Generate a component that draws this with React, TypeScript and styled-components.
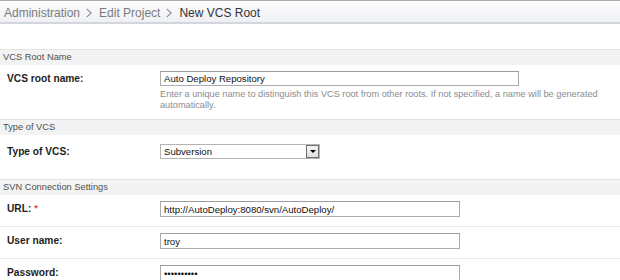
import React from 'react'
import styled, { createGlobalStyle } from 'styled-components'

const GlobalStyle = createGlobalStyle`
  *, *::before, *::after { box-sizing: border-box; }
  html, body { margin: 0; padding: 0; background: #fff; }
  body {
    width: 620px;
    height: 280px;
    overflow: hidden;
    font-family: "Liberation Sans", Arial, sans-serif;
  }
`

const TopBar = styled.div`
  height: 24px;
  border-top: 1px solid #adadad;
  border-bottom: 2px solid #d3d6dd;
  background: linear-gradient(#fcfcfd, #eef0f4);
  display: flex;
  align-items: center;
  padding: 3px 0 0 4px;
  font-size: 12px;
`

const Crumb = styled.span<{ $current?: boolean }>`
  color: ${({ $current }) => ($current ? '#333' : '#7c7c7c')};
`

const Chevron = styled.svg`
  margin: 0 7px 0 6px;
  flex: none;
`

const Form = styled.div`
  margin-top: 25px;
`

const SectionHeader = styled.div`
  height: 16px;
  border-top: 1px solid #e3e3e3;
  background: #f3f3f3;
  color: #505050;
  font-size: 9.3px;
  line-height: 15px;
  padding-left: 3px;
`

const Row = styled.div<{ $top: number; $bottom: number; $line?: boolean }>`
  display: grid;
  grid-template-columns: 160px 1fr;
  align-items: start;
  padding: ${({ $top, $bottom }) => `${$top}px 0 ${$bottom}px`};
  border-bottom: ${({ $line }) => ($line ? '1px solid #e9e9e9' : 'none')};
`

const Label = styled.label<{ $h: number }>`
  padding-left: 7px;
  font-weight: bold;
  font-size: 10.2px;
  color: #1e1e1e;
  line-height: ${({ $h }) => $h}px;
`

const Required = styled.span`
  color: #e0393a;
  margin-left: 3px;
  font-size: 9px;
  position: relative;
  top: -1px;
`

const TextBox = styled.input<{ $w: number; $h: number }>`
  display: block;
  width: ${({ $w }) => $w}px;
  height: ${({ $h }) => $h}px;
  margin: 0;
  padding: 0 0 0 3px;
  border: 1px solid #acacac;
  border-top-color: #9d9d9d;
  border-radius: 0;
  background: #fff;
  font-family: "Liberation Sans", Arial, sans-serif;
  font-size: 9.6px;
  color: #111;
  outline: none;
`

const Help = styled.div`
  width: 458px;
  margin-top: 3px;
  font-size: 9.2px;
  line-height: 11px;
  color: #8c8c8c;
`

const Select = styled.div`
  width: 160px;
  height: 15px;
  border: 1px solid #b4b4b4;
  display: flex;
  align-items: center;
  justify-content: space-between;
  padding-left: 3px;
  font-size: 9.6px;
  color: #111;
`

const SelectButton = styled.div`
  width: 13px;
  height: 13px;
  border: 1px solid #6f6f6f;
  background: linear-gradient(#f6f6f6, #dedede);
  display: flex;
  align-items: center;
  justify-content: center;
`

const Arrow = styled.div`
  width: 0;
  height: 0;
  border-left: 3px solid transparent;
  border-right: 3px solid transparent;
  border-top: 3px solid #000;
`

const Sep = () => (
  <Chevron width="6" height="10" viewBox="0 0 6 10">
    <path d="M0.7 0.8 L5.2 5 L0.7 9.2" fill="none" stroke="#8d8d8d" strokeWidth="1.1" />
  </Chevron>
)

export default function App() {
  return (
    <>
      <GlobalStyle />
      <TopBar>
        <Crumb>Administration</Crumb>
        <Sep />
        <Crumb>Edit Project</Crumb>
        <Sep />
        <Crumb $current>New VCS Root</Crumb>
      </TopBar>
      <Form>
        <SectionHeader>VCS Root Name</SectionHeader>
        <Row $top={6} $bottom={8}>
          <Label $h={15}>VCS root name:</Label>
          <div>
            <TextBox $w={359} $h={15} readOnly value="Auto Deploy Repository" />
            <Help>
              Enter a unique name to distinguish this VCS root from other roots. If not specified, a name will be generated
              automatically.
            </Help>
          </div>
        </Row>
        <SectionHeader>Type of VCS</SectionHeader>
        <Row $top={9} $bottom={20}>
          <Label $h={15}>Type of VCS:</Label>
          <Select>
            <span>Subversion</span>
            <SelectButton>
              <Arrow />
            </SelectButton>
          </Select>
        </Row>
        <SectionHeader>SVN Connection Settings</SectionHeader>
        <Row $top={6} $bottom={9} $line>
          <Label $h={16}>
            URL:<Required>*</Required>
          </Label>
          <TextBox $w={300} $h={16} readOnly value="http://AutoDeploy:8080/svn/AutoDeploy/" />
        </Row>
        <Row $top={6} $bottom={9} $line>
          <Label $h={16}>User name:</Label>
          <TextBox $w={300} $h={16} readOnly value="troy" />
        </Row>
        <Row $top={6} $bottom={9}>
          <Label $h={16}>Password:</Label>
          <TextBox $w={300} $h={16} type="password" readOnly value="password12" />
        </Row>
      </Form>
    </>
  )
}
